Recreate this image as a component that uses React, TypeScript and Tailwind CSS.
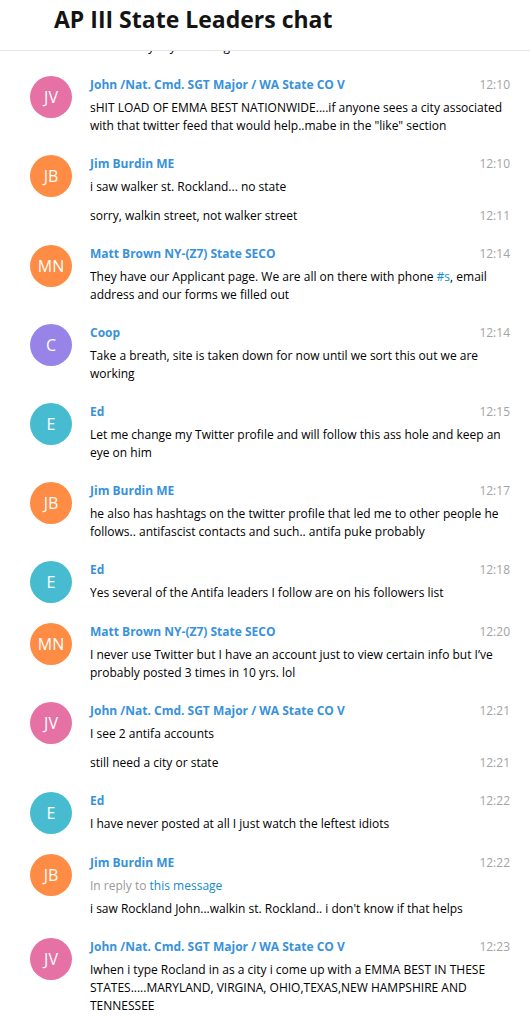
import type { ReactNode } from 'react';

interface Entry {
  time: string;
  text: ReactNode;
  reply?: boolean;
}

interface Message {
  id: number;
  initials: string;
  color: string;
  name: string;
  entries: Entry[];
}

const JV = { initials: 'JV', color: 'bg-[#e671a5]', name: 'John /Nat. Cmd. SGT Major / WA State CO V' };
const JB = { initials: 'JB', color: 'bg-[#ff8c44]', name: 'Jim Burdin ME' };
const MN = { initials: 'MN', color: 'bg-[#ff8c44]', name: 'Matt Brown NY-(Z7) State SECO' };
const CO = { initials: 'C', color: 'bg-[#9884e8]', name: 'Coop' };
const ED = { initials: 'E', color: 'bg-[#47bcd1]', name: 'Ed' };

const messages: Message[] = [
  {
    id: 1,
    ...JV,
    entries: [
      {
        time: '12:10',
        text: 'sHIT LOAD OF EMMA BEST NATIONWIDE....if anyone sees a city associated with that twitter feed that would help..mabe in the "like" section',
      },
    ],
  },
  {
    id: 2,
    ...JB,
    entries: [
      { time: '12:10', text: 'i saw walker st. Rockland... no state' },
      { time: '12:11', text: 'sorry, walkin street, not walker street' },
    ],
  },
  {
    id: 3,
    ...MN,
    entries: [
      {
        time: '12:14',
        text: (
          <>
            They have our Applicant page. We are all on there with phone{' '}
            <span className="text-[#168acd]">#s</span>, email address and our forms we filled out
          </>
        ),
      },
    ],
  },
  {
    id: 4,
    ...CO,
    entries: [
      { time: '12:14', text: 'Take a breath, site is taken down for now until we sort this out we are working' },
    ],
  },
  {
    id: 5,
    ...ED,
    entries: [
      { time: '12:15', text: 'Let me change my Twitter profile and will follow this ass hole and keep an eye on him' },
    ],
  },
  {
    id: 6,
    ...JB,
    entries: [
      {
        time: '12:17',
        text: 'he also has hashtags on the twitter profile that led me to other people he follows.. antifascist contacts and such.. antifa puke probably',
      },
    ],
  },
  {
    id: 7,
    ...ED,
    entries: [{ time: '12:18', text: 'Yes several of the Antifa leaders I follow are on his followers list' }],
  },
  {
    id: 8,
    ...MN,
    entries: [
      {
        time: '12:20',
        text: 'I never use Twitter but I have an account just to view certain info but I\u2019ve probably posted 3 times in 10 yrs. lol',
      },
    ],
  },
  {
    id: 9,
    ...JV,
    entries: [
      { time: '12:21', text: 'I see 2 antifa accounts' },
      { time: '12:21', text: 'still need a city or state' },
    ],
  },
  {
    id: 10,
    ...ED,
    entries: [{ time: '12:22', text: 'I have never posted at all I just watch the leftest idiots' }],
  },
  {
    id: 11,
    ...JB,
    entries: [
      {
        time: '12:22',
        reply: true,
        text: "i saw Rockland John...walkin st. Rockland.. i don't know if that helps",
      },
    ],
  },
  {
    id: 12,
    ...JV,
    entries: [
      {
        time: '12:23',
        text: 'Iwhen i type Rocland in as a city i come up with a EMMA BEST IN THESE STATES.....MARYLAND, VIRGINA, OHIO,TEXAS,NEW HAMPSHIRE AND TENNESSEE',
      },
    ],
  },
];

function Avatar({ initials, color }: { initials: string; color: string }) {
  return (
    <div
      className={`h-[42px] w-[42px] shrink-0 rounded-full ${color} flex items-center justify-center text-[16px] leading-[42px] text-white select-none`}
    >
      {initials}
    </div>
  );
}

function MessageBlock({ msg }: { msg: Message }) {
  const [first, ...rest] = msg.entries;
  return (
    <>
      <div className="flex pl-[30px] pr-[20px] py-[10px]">
        <Avatar initials={msg.initials} color={msg.color} />
        <div className="ml-[18px] min-w-0 flex-1">
          <div className="flex items-start justify-between pb-[5px]">
            <span className="font-bold text-[#3892db]">{msg.name}</span>
            <span className="text-[#a3a3a3]">{first.time}</span>
          </div>
          {first.reply && (
            <div className="pb-[5px] text-[#999999]">
              In reply to <span className="text-[#168acd]">this message</span>
            </div>
          )}
          <div className="break-words text-[#000000]">{first.text}</div>
        </div>
      </div>
      {rest.map((entry, i) => (
        <div key={i} className="-mt-[10px] pl-[90px] pr-[20px] py-[10px]">
          <div className="flex items-start justify-between gap-2">
            <div className="min-w-0 flex-1 break-words">{entry.text}</div>
            <span className="text-[#a3a3a3]">{entry.time}</span>
          </div>
        </div>
      ))}
    </>
  );
}

export default function App() {
  return (
    <div
      className="h-[1017px] w-full overflow-hidden bg-white flex flex-col text-[12px] leading-[18px] text-black"
      style={{ fontFamily: '"Open Sans", "Liberation Sans", sans-serif' }}
    >
      <div className="h-[51px] shrink-0 border-b border-[#e3e6e8] pl-[54px] pt-[4px]">
        <h1 className="text-[23px] leading-[30px] font-bold text-[#141414]">AP III State Leaders chat</h1>
      </div>
      <div className="flex-1 overflow-hidden">
        <div className="-mt-[13px] h-[18px] pl-[90px] pb-[10px] box-content">Where they say that it's gone</div>
        {messages.map((msg) => (
          <MessageBlock key={msg.id} msg={msg} />
        ))}
      </div>
    </div>
  );
}
